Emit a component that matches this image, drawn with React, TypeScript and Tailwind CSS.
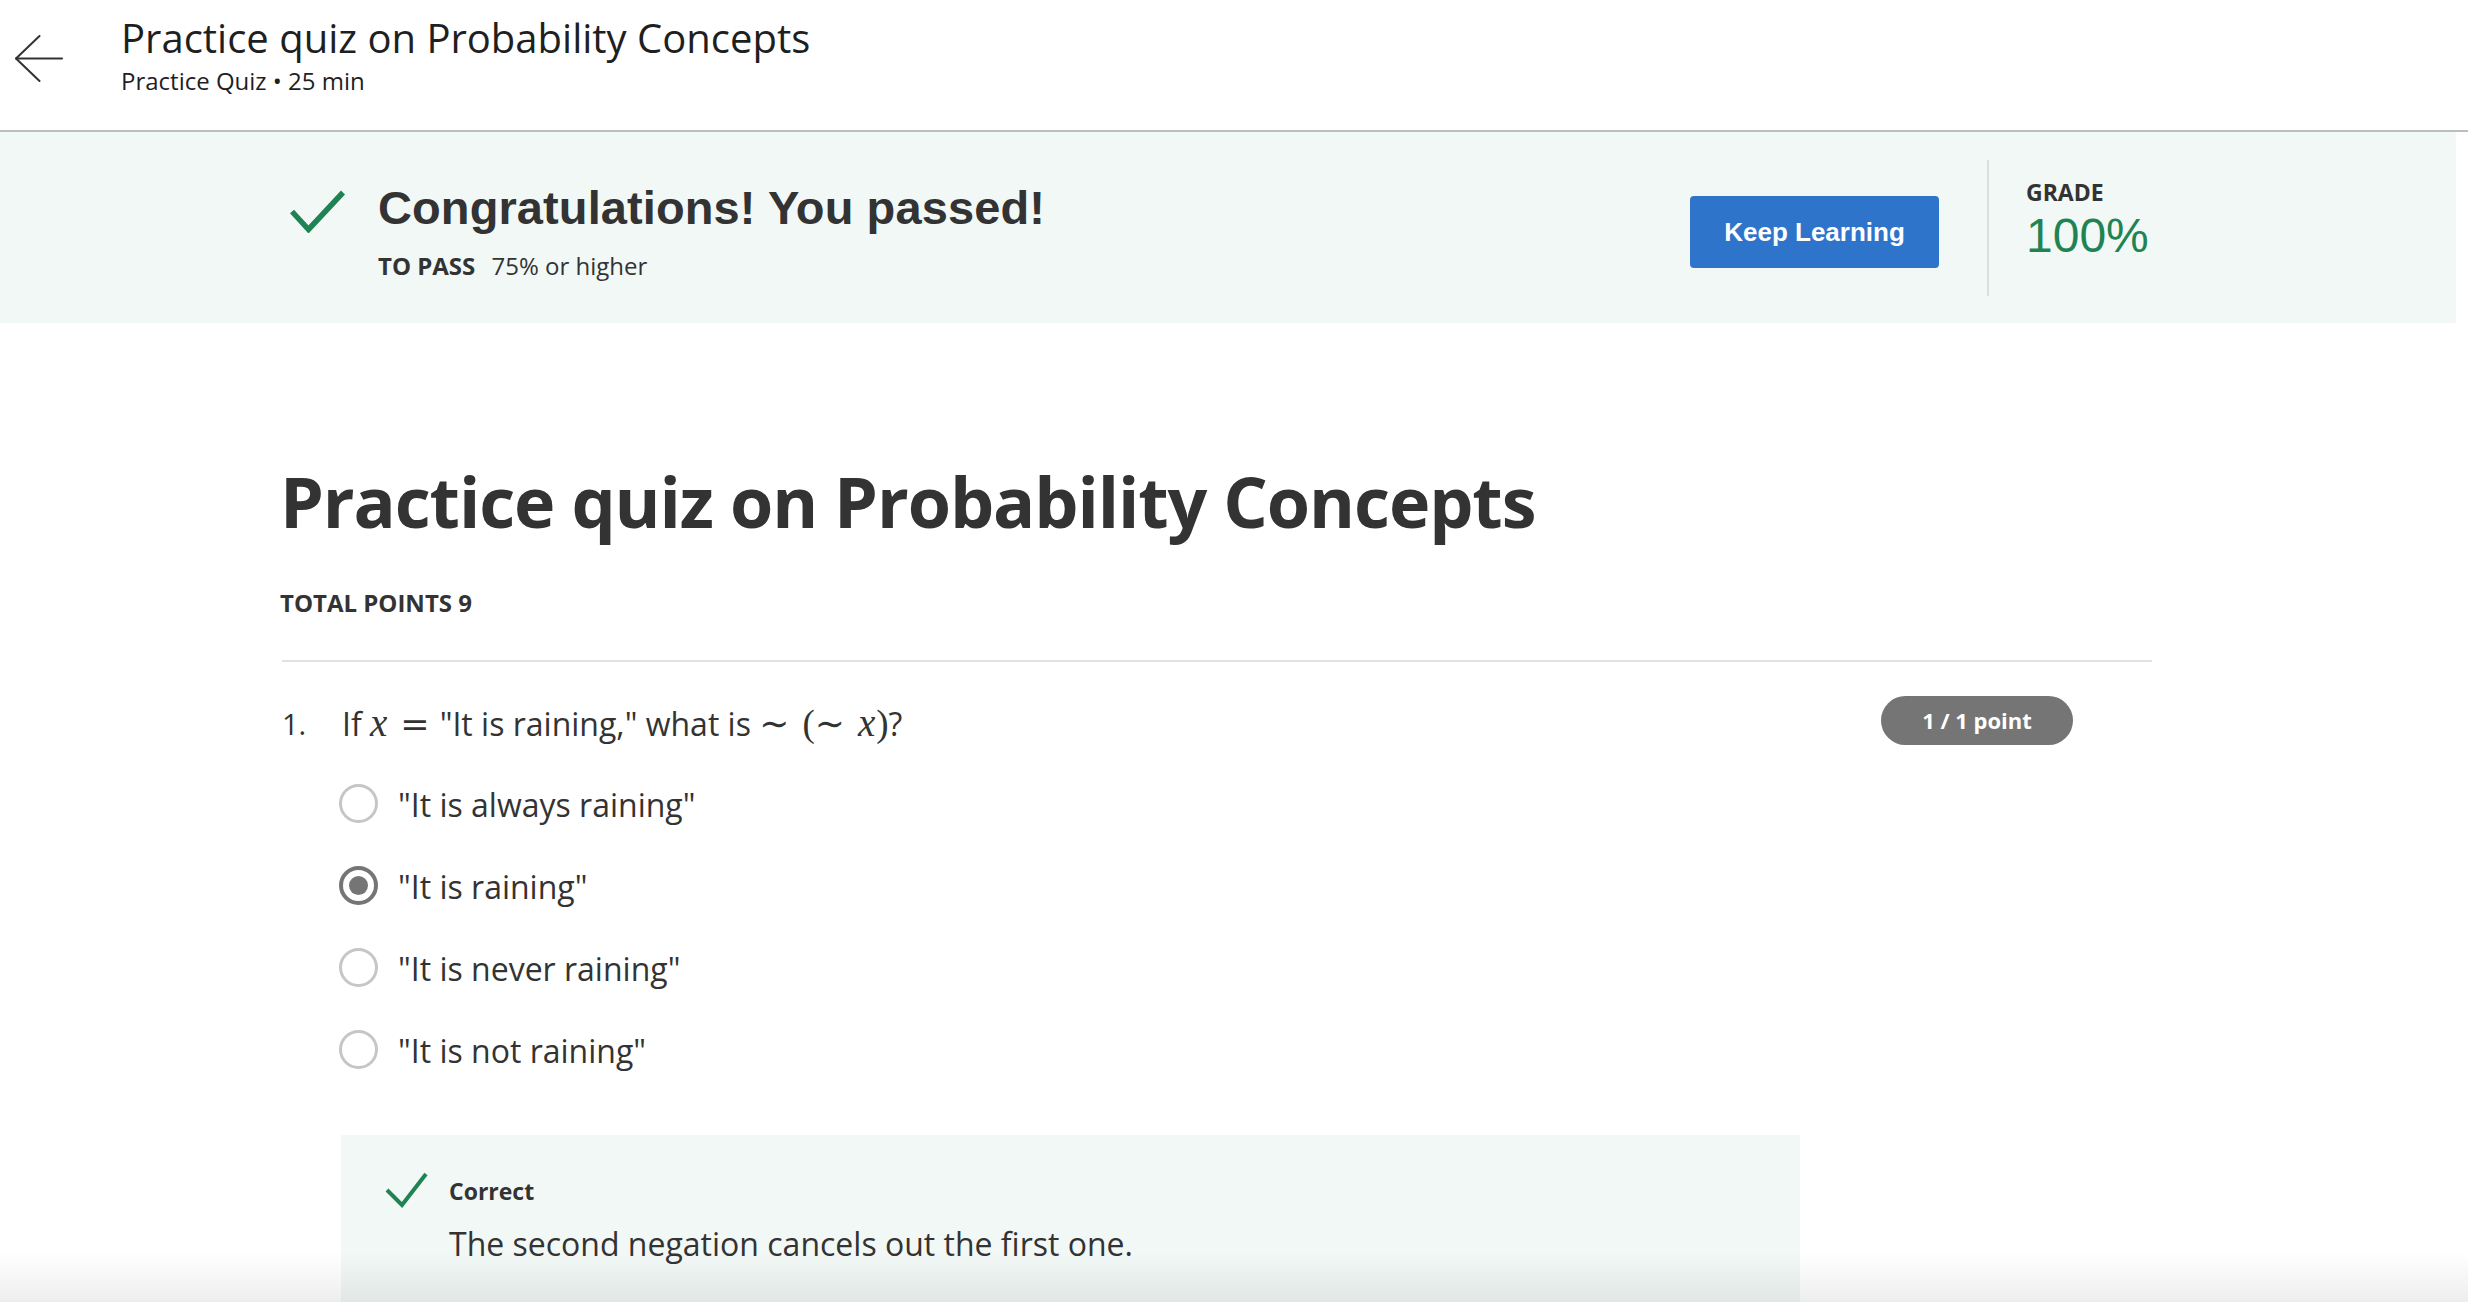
import React from "react";

const OS = { fontFamily: "'Open Sans', 'Noto Sans', sans-serif" };
const AR = { fontFamily: "'Liberation Sans', Arial, sans-serif" };
const SERIF = { fontFamily: "'Liberation Serif', 'DejaVu Serif', serif" };
const DSERIF = { fontFamily: "'DejaVu Serif', 'Liberation Serif', serif" };

function Radio({ selected }: { selected?: boolean }) {
  if (selected) {
    return (
      <div className="w-[39px] h-[39px] rounded-full border-[4px] border-[#757575] flex items-center justify-center shrink-0">
        <div className="w-[19px] h-[19px] rounded-full bg-[#757575]" />
      </div>
    );
  }
  return <div className="w-[39px] h-[39px] rounded-full border-[3px] border-[#c6c6c6] shrink-0" />;
}

const options = [
  { label: '"It is always raining"', selected: false },
  { label: '"It is raining"', selected: true },
  { label: '"It is never raining"', selected: false },
  { label: '"It is not raining"', selected: false },
];

export default function App() {
  return (
    <div className="relative w-[2468px] h-[1302px] overflow-hidden bg-white text-[#333333]" style={OS}>
      {/* Header */}
      <header className="h-[132px] border-b-2 border-[#bdbdbd] flex">
        <div className="pl-[15px] pt-[35px]">
          <svg width="48" height="47" viewBox="0 0 48 47" fill="none" stroke="#333333" strokeWidth="2" strokeLinecap="round" strokeLinejoin="round">
            <path d="M47 23.5H1" />
            <path d="M24.5 1L1 23.5L24.5 46" />
          </svg>
        </div>
        <div className="ml-[58px] pt-[12px]">
          <div className="text-[40px] leading-[51px] text-[#1f1f1f]">Practice quiz on Probability Concepts</div>
          <div className="mt-[3px] text-[24px] leading-[30px] text-[#1f1f1f]">Practice Quiz • 25 min</div>
        </div>
      </header>

      {/* Banner */}
      <section className="h-[191px] bg-[#f2f8f6] mr-[12px]">
        <div className="ml-[282px] w-[1870px] flex items-start h-full">
          <div className="flex-1 flex items-start">
            <svg className="mt-[57px] ml-[6px]" width="58" height="44" viewBox="0 0 58 44" fill="none" stroke="#1f8354" strokeWidth="5.5">
              <path d="M4 22.5L20.5 40.5L55 3.5" />
            </svg>
            <div className="ml-[32px] mt-[48px]">
              <div className="text-[47px] leading-[56px] font-bold text-[#333333] tracking-[0.1px]" style={AR}>
                Congratulations! You passed!
              </div>
              <div className="mt-[15px] text-[24px] leading-[30px] text-[#333333]">
                <span className="font-bold">TO PASS</span>
                <span className="ml-[10px]"> 75% or higher</span>
              </div>
            </div>
          </div>
          <button
            className="mt-[64px] w-[249px] h-[72px] rounded-[4px] bg-[#2f74cb] text-white text-[26px] font-bold"
            style={AR}
          >
            Keep Learning
          </button>
          <div className="ml-[48px] mt-[28px] w-[2px] h-[136px] bg-[#dddddd]" />
          <div className="ml-[37px] mt-[45px] w-[126px]">
            <div className="text-[23px] leading-[30px] font-bold text-[#333333]">GRADE</div>
            <div className="mt-[1px] text-[48px] leading-[56px] text-[#1f8354]" style={AR}>100%</div>
          </div>
        </div>
      </section>

      {/* Main */}
      <main className="ml-[280px] w-[1872px]">
        <h1 className="mt-[133px] text-[70px] leading-[90px] font-bold text-[#333333] tracking-[-1.1px]">
          Practice quiz on Probability Concepts
        </h1>
        <div className="mt-[41px] text-[24px] leading-[32px] font-bold text-[#333333]">TOTAL POINTS 9</div>
        <div className="mt-[41px] h-[2px] bg-[#e1e1e1] ml-[2px]" />

        <div className="mt-[37px] flex items-center">
          <div className="w-[62px] pl-[2px] text-[29px] leading-[40px] text-[#333333]">1.</div>
          <div className="flex-1 flex items-baseline text-[32px] leading-[40px] text-[#333333] whitespace-nowrap">
            <span>If&nbsp;</span>
            <span className="italic text-[39px]" style={SERIF}>x</span>
            <span className="text-[35px] ml-[13px] mr-[10px]" style={DSERIF}>=</span>
            <span>"It is raining," what is&nbsp;</span>
            <span className="text-[36px]" style={DSERIF}>∼</span>
            <span className="text-[37px] ml-[13px]" style={SERIF}>(</span>
            <span className="text-[36px]" style={DSERIF}>∼</span>
            <span className="italic text-[39px] ml-[13px]" style={SERIF}>x</span>
            <span className="text-[37px] ml-[1px]" style={SERIF}>)</span>
            <span>?</span>
          </div>
          <div
            className="mr-[79px] -mt-[3px] mb-[3px] w-[192px] h-[49px] rounded-full bg-[#757575] text-white text-[22px] font-bold flex items-center justify-center"
          >
            1 / 1 point
          </div>
        </div>

        <div className="mt-[14px] pl-[59px] flex flex-col">
          {options.map((o) => (
            <div key={o.label} className="h-[82px] flex items-center">
              <Radio selected={o.selected} />
              <span className="ml-[20px] text-[32px] leading-[40px] text-[#333333] mt-[3px]">{o.label}</span>
            </div>
          ))}
        </div>

        <div className="mt-[45px] ml-[61px] w-[1459px] h-[220px] bg-[#f2f8f6] pt-[37px] pl-[43px] flex items-start">
          <svg width="44" height="36" viewBox="0 0 44 36" fill="none" stroke="#1f8354" strokeWidth="4">
            <path d="M3 18L18 33L42 2" />
          </svg>
          <div className="ml-[21px]">
            <div className="mt-[4px] text-[23px] leading-[30px] font-bold text-[#333333]">Correct</div>
            <div className="mt-[18px] text-[32px] leading-[40px] text-[#333333]">
              The second negation cancels out the first one.
            </div>
          </div>
        </div>
      </main>

      <div className="pointer-events-none absolute bottom-0 left-0 right-0 h-[50px] bg-gradient-to-b from-transparent to-black/[0.07]" />
    </div>
  );
}
